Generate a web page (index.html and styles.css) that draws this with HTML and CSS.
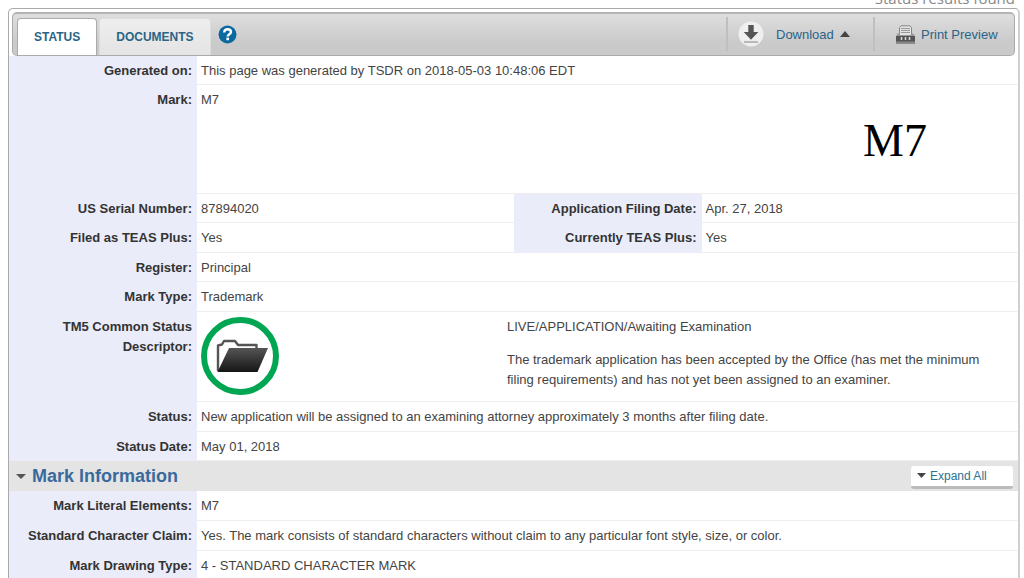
FILE: index.html
```html
<!DOCTYPE html>
<html lang="en">
<head>
<meta charset="UTF-8">
<title>TSDR - M7</title>
<link rel="stylesheet" href="styles.css">
</head>
<body>
	<p class="found">Status results found</p>
	<main class="panel">
		<header class="toolbar">
			<nav class="tabs">
				<a class="tab active" href="#status">STATUS</a>
				<a class="tab" href="#documents">DOCUMENTS</a>
			</nav>
			<a class="help" href="#help" aria-label="Help">
				<svg width="19" height="19" viewBox="0 0 19 19">
					<circle cx="9.5" cy="9.5" r="9" fill="#0a69a0"/>
					<path d="M6.2 7.4C6.2 5.2 7.6 4.2 9.6 4.2S13 5.3 13 7.1C13 9.2 9.7 9.3 9.7 11.4" fill="none" stroke="#fff" stroke-width="2.4"/>
					<rect x="8.4" y="12.6" width="2.6" height="2.6" fill="#fff"/>
				</svg>
			</a>
			<div class="actions">
				<button class="action download" type="button">
					<svg width="26" height="26" viewBox="0 0 26 26">
						<circle cx="13" cy="13" r="12.5" fill="#f0efef"/>
						<path d="M10.3 4h5.4v7h4.6L13 18.8 5.7 11h4.6z" fill="#555"/>
						<path d="M6 21h14" stroke="#b9b9b9" stroke-width="2"/>
					</svg>
					<span>Download</span>
					<svg width="10" height="6" viewBox="0 0 10 6"><path d="M0 6L5 0l5 6z" fill="#444"/></svg>
				</button>
				<button class="action print" type="button">
					<svg width="19" height="19" viewBox="0 0 19 19">
						<path d="M3.500 11V2.500L5 .8h9l1.500 1.700V11z" fill="#e4e4e4" stroke="#888"/>
						<path d="M5 3.500h9M5 5.500h9M5 7.500h9" stroke="#999"/>
						<path d="M1.500 8.500h2V10h12V8.500h2l1.500 3H0z" fill="#999"/>
						<path d="M0 11h19v7.500H0z" fill="#555"/>
						<path d="M0 16.500h19v2H0z" fill="#888"/>
						<path d="M5.500 12v3M9.500 12v3M13.500 12v3" stroke="#ddd" stroke-width="1.500"/>
					</svg>
					<span>Print Preview</span>
				</button>
			</div>
		</header>

		<dl class="rows">
			<div class="row"><dt>Generated on:</dt><dd>This page was generated by TSDR on 2018-05-03 10:48:06 EDT</dd></div>
			<div class="row mark"><dt>Mark:</dt><dd>M7 <span class="drawing">M7</span></dd></div>
			<div class="row"><dt>US Serial Number:</dt><dd>87894020</dd><dt>Application Filing Date:</dt><dd>Apr. 27, 2018</dd></div>
			<div class="row"><dt>Filed as TEAS Plus:</dt><dd>Yes</dd><dt>Currently TEAS Plus:</dt><dd>Yes</dd></div>
			<div class="row"><dt>Register:</dt><dd>Principal</dd></div>
			<div class="row"><dt>Mark Type:</dt><dd>Trademark</dd></div>
			<div class="row descriptor">
				<dt>TM5 Common Status Descriptor:</dt>
				<dd>
					<div class="badge">
						<svg width="78" height="78" viewBox="0 0 78 78">
							<defs>
								<linearGradient id="folder" x1="0" y1="0" x2="0" y2="1">
									<stop offset="0" stop-color="#555"/>
									<stop offset="1" stop-color="#151515"/>
								</linearGradient>
							</defs>
							<circle cx="39" cy="39" r="36" fill="#fff" stroke="#00a651" stroke-width="6"/>
							<path d="M17 54V28.500L21 27.500l2-3.500h11l3 4h18.500V32" fill="none" stroke="#555" stroke-width="2.400" stroke-linejoin="round"/>
							<path d="M28 31h39L56.500 55H16.500z" fill="url(#folder)"/>
						</svg>
					</div>
					<div class="explain">
						<p>LIVE/APPLICATION/Awaiting Examination</p>
						<p>The trademark application has been accepted by the Office (has met the minimum filing requirements) and has not yet been assigned to an examiner.</p>
					</div>
				</dd>
			</div>
			<div class="row"><dt>Status:</dt><dd>New application will be assigned to an examining attorney approximately 3 months after filing date.</dd></div>
			<div class="row"><dt>Status Date:</dt><dd>May 01, 2018</dd></div>
		</dl>

		<div class="section">
			<h2><svg width="10" height="5" viewBox="0 0 10 5"><path d="M0 0h10L5 5z" fill="#555"/></svg>Mark Information</h2>
			<button class="expand" type="button"><svg width="9" height="5" viewBox="0 0 9 5"><path d="M0 0h9L4.500 5z" fill="#444"/></svg>Expand All</button>
		</div>

		<dl class="rows">
			<div class="row"><dt>Mark Literal Elements:</dt><dd>M7</dd></div>
			<div class="row"><dt>Standard Character Claim:</dt><dd>Yes. The mark consists of standard characters without claim to any particular font style, size, or color.</dd></div>
			<div class="row"><dt>Mark Drawing Type:</dt><dd>4 - STANDARD CHARACTER MARK</dd></div>
		</dl>
	</main>
</body>
</html>
```

FILE: styles.css
```css
html { height: 100%; overflow: hidden; }
body { margin: 0; padding: 0 4px 0 8px; height: 100%; box-sizing: border-box; overflow: hidden; background: #fff; color: #444; font: 13px/20px "Liberation Sans", Arial, sans-serif; }
p, h2, dl, dd { margin: 0; }
button { border: none; background: none; padding: 0; font-family: inherit; cursor: pointer; }
svg { display: block; flex: none; }

.found { margin-top: -12px; padding-right: 5px; text-align: right; font: 15px/20px "Open Sans", sans-serif; color: #888; }
.panel { min-height: 100%; box-sizing: border-box; border: 1px solid #aaa; border-right: 2px solid #d0d0d0; border-radius: 5px 5px 0 0; }

/* toolbar */
.toolbar { display: flex; align-items: center; height: 44px; box-sizing: border-box; margin: 3px 3px 0; padding-left: 4px; border: 1px solid #aaa; border-top: 2px solid #b5b5b5; border-radius: 5px; background: linear-gradient(#dedede, #cacaca 70%); }
.tabs { display: flex; align-self: stretch; gap: 2px; padding-top: 4px; }
.tab { padding: 0 16px; line-height: 36px; border: 1px solid #ddd; border-bottom: none; border-radius: 4px 4px 0 0; background: linear-gradient(#eee, #e4e4e4); color: #2a6486; font-weight: bold; font-size: 12px; text-decoration: none; }
.tab.active { background: #fff; border-color: #aaa; }
.help { margin-left: 7px; }
.actions { display: flex; align-self: stretch; margin: 3px 0 4px auto; }
.action { display: flex; align-items: center; box-sizing: border-box; border-left: 2px solid #bfbfbf; color: #2a6486; font-size: 13px; }
.download { width: 147px; gap: 12px; padding-left: 10px; }
.download svg:last-child { margin-left: -6px; }
.print { width: 141px; gap: 6px; padding-left: 21px; }

/* label / value rows */
.row { display: flex; min-height: 29px; box-sizing: border-box; }
.row:nth-child(even) { min-height: 30px; }
dt { flex: 0 0 188px; box-sizing: border-box; padding: 5px 5px 0; text-align: right; font-weight: bold; color: #333; background: #eaecf9; }
dd { flex: 1; box-sizing: border-box; padding: 5px 4px 3px; border-bottom: 1px solid #eee; }
.rows .mark { min-height: 109px; }
.mark dd { display: flex; justify-content: space-between; }
.drawing { padding: 28px 87px 0 0; font: 46px/46px "Liberation Serif", "Times New Roman", serif; color: #000; }
.rows .descriptor { min-height: 90px; }
.descriptor dd { display: flex; }
.badge { flex: 0 0 306px; }
.explain { padding-right: 10px; }
.explain p + p { margin-top: 13px; }

/* section heading */
.section { display: flex; align-items: center; justify-content: space-between; height: 30px; padding: 0 5px 0 7px; background: #e4e4e4; }
.section h2 { display: flex; align-items: center; gap: 6px; font-size: 18px; line-height: 30px; color: #3a6a9c; }
.section + .rows .row { min-height: 30px; }
.expand { display: flex; align-items: center; gap: 4px; width: 102px; height: 23px; margin-top: 2px; padding: 0 6px; border-bottom: 3px solid #bbb; border-radius: 3px; background: #fff; color: #2a7390; font-size: 12px; }
```
